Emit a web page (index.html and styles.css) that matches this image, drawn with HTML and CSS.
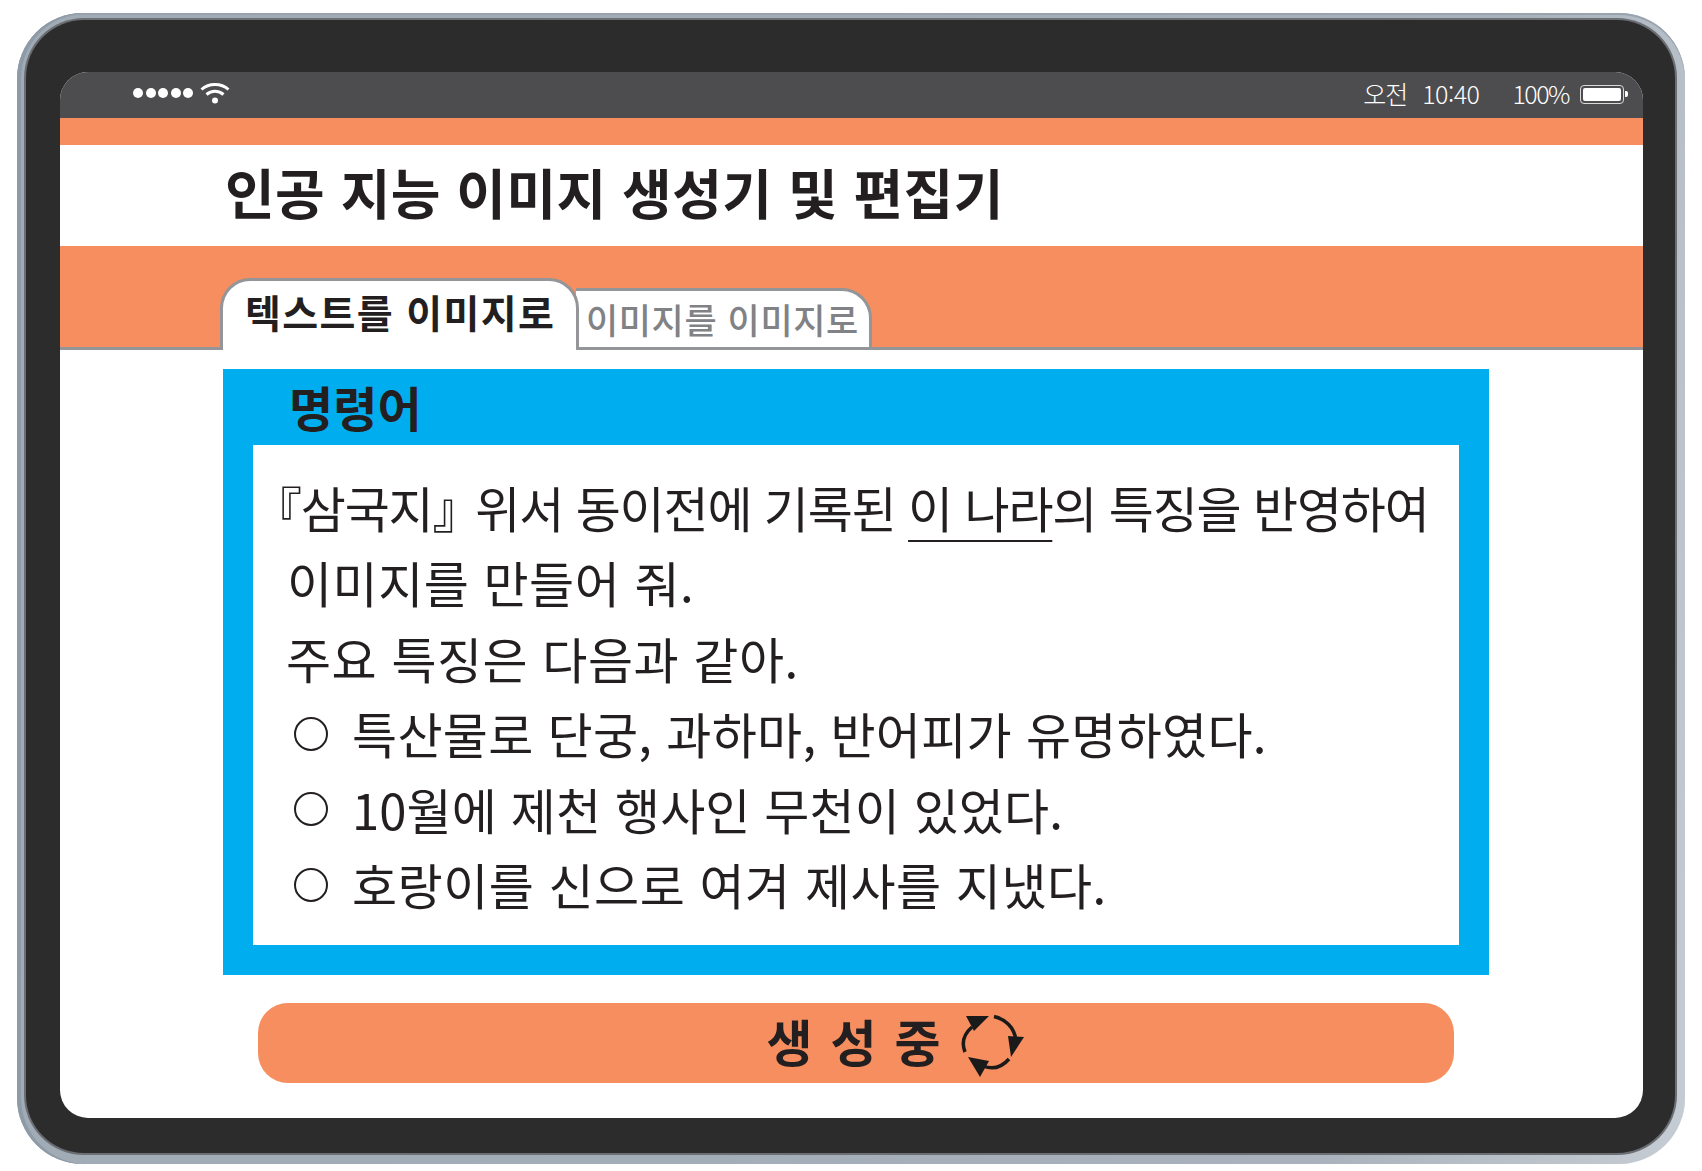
FILE: index.html
```html
<!DOCTYPE html>
<html lang="ko">
<head>
<meta charset="utf-8">
<title>인공 지능 이미지 생성기 및 편집기</title>
<link rel="stylesheet" href="styles.css">
</head>
<body>
<div class="device">
  <div class="bezel">
    <div class="screen">
      <div class="status">
        <div class="status-left">
          <div class="dots"><i></i><i></i><i></i><i></i><i></i></div>
          <svg class="wifi" width="30" height="22" viewBox="0 0 30 22"><path d="M1.500 7.500C9 .8 21 .8 28.500 7.500" fill="none" stroke="#fff" stroke-width="3"/><path d="M6.500 12.500C11.500 8.200 18.500 8.200 23.500 12.500" fill="none" stroke="#fff" stroke-width="3"/><circle cx="15" cy="18.500" r="3" fill="#fff"/></svg>
        </div>
        <div class="status-right">
          <span class="ampm">오전</span><span class="time">10:40</span><span class="pct">100%</span>
          <div class="battery"><div class="battery-body"><div class="battery-fill"></div></div><div class="battery-tip"></div></div>
        </div>
      </div>
      <div class="strip"></div>
      <h1 class="title">인공 지능 이미지 생성기 및 편집기</h1>
      <div class="tabbar">
        <div class="tab tab-active">텍스트를 이미지로</div>
        <div class="tab tab-idle">이미지를 이미지로</div>
      </div>
      <div class="content">
        <section class="panel">
          <h2 class="panel-title">명령어</h2>
          <div class="prompt">
            <p class="line line-first"><span class="source">『삼국지』</span>위서 동이전에 기록된 <span class="mark">이 나라</span>의 특징을 반영하여</p>
            <p class="line">이미지를 만들어 줘.</p>
            <p class="line line-third">주요 특징은 다음과 같아.</p>
            <p class="line item item-mid"><span class="bullet"></span>특산물로 단궁, 과하마, 반어피가 유명하였다.</p>
            <p class="line item item-tight"><span class="bullet"></span>10월에 제천 행사인 무천이 있었다.</p>
            <p class="line item"><span class="bullet"></span>호랑이를 신으로 여겨 제사를 지냈다.</p>
          </div>
        </section>
        <div class="button">
          <span class="button-label">생 성 중</span>
          <svg class="spin" width="64" height="64" viewBox="0 0 64 64">
            <g fill="none" stroke="#1a1a1a" stroke-width="3.500">
              <path d="M4 38C0 28 3 20 11 13"/>
              <path d="M33 2.500C44 5 53 13 55 26"/>
              <path d="M48 45C41 53 32 56 22 52"/>
            </g>
            <g fill="#1a1a1a">
              <path d="M28 2 5 2 13 17Z"/>
              <path d="M63 23 50 43 47 22Z"/>
              <path d="M19 63 7 43 28 47Z"/>
            </g>
          </svg>
        </div>
      </div>
    </div>
  </div>
</div>
</body>
</html>
```

FILE: styles.css
```css
* { box-sizing: border-box; }
html, body { margin: 0; padding: 0; background: #fff; }
body {
  width: 1702px;
  height: 1171px;
  padding: 13px 17px 7px 17px;
  font-family: "Noto Sans CJK KR", "Noto Sans", sans-serif;
  color: #231f20;
}
.device {
  width: 1668px;
  height: 1151px;
  border-radius: 66px;
  padding: 7px 10px 11px 9px;
  background: linear-gradient(100deg, #a0abb6 0%, #a3adb7 45%, #a9b2bc 80%, #c6ccd3 100%);
  box-shadow: inset 4px 0 0 #8d9aa7, inset 0 2px 0 #98a3ae;
}
.bezel {
  width: 100%;
  height: 100%;
  border-radius: 58px;
  background: #2d2c2d;
  padding: 52px 32px 35px 34px;
  box-shadow: 0 0 0 2px #6b6e73;
}
.screen {
  height: 100%;
  border-radius: 28px;
  background: #fff;
  overflow: hidden;
  display: flex;
  flex-direction: column;
}
.status {
  height: 46px;
  flex: none;
  background: #4d4d4f;
  color: #fff;
  display: flex;
  align-items: center;
  justify-content: space-between;
  padding: 0 15px 0 73px;
}
.status-left { display: flex; align-items: center; gap: 7px; margin-top: -4px; }
.dots { display: flex; gap: 2.500px; }
.dots i { width: 10px; height: 10px; border-radius: 50%; background: #fff; display: block; }
.wifi { display: block; margin-top: -1px; }
.status-right { display: flex; align-items: center; font-size: 25px; line-height: 30px; font-weight: 300; letter-spacing: -0.5px; margin-top: -4px; }
.ampm { margin-right: 15px; letter-spacing: -1px; }
.time { margin-right: 33px; }
.pct { margin-right: 11px; letter-spacing: -1.500px; }
.battery { display: flex; align-items: center; margin-top: 2px; }
.battery-body { width: 44px; height: 19px; border: 1px solid #d8d8d8; border-radius: 4px; padding: 2px; }
.battery-fill { width: 100%; height: 100%; background: #fff; border-radius: 2px; }
.battery-tip { width: 3px; height: 6px; background: #fff; border-radius: 0 2px 2px 0; margin-left: 1px; }
.strip { height: 27px; flex: none; background: #f68e5f; }
.title {
  height: 101px;
  flex: none;
  margin: 0;
  padding: 0 0 0 165px;
  font-size: 54px;
  line-height: 94px;
  font-weight: 700;
  letter-spacing: 0.4px;
  white-space: nowrap;
}
.tabbar {
  height: 104px;
  flex: none;
  background: #f68e5f;
  border-bottom: 3px solid #939598;
  display: flex;
  align-items: flex-end;
  padding-left: 160px;
}
.tab {
  background: #fff;
  border: 3px solid #939598;
  white-space: nowrap;
  margin-bottom: -3px;
}
.tab-active {
  width: 359px;
  height: 72px;
  border-bottom: 0;
  border-radius: 30px 30px 0 0;
  font-size: 39px;
  font-weight: 700;
  line-height: 60px;
  padding-left: 22px;
  letter-spacing: 1.350px;
  position: relative;
  z-index: 1;
}
.tab-idle {
  width: 296px;
  height: 62px;
  margin-left: -3px;
  border-left: 0;
  border-radius: 0 30px 0 0;
  font-size: 35px;
  line-height: 56px;
  padding-left: 10px;
  color: #808285;
  font-weight: 500;
  letter-spacing: 0.6px;
}
.content {
  flex: 1;
  padding: 19px 154px 0 163px;
  display: flex;
  flex-direction: column;
  align-items: center;
}
.panel {
  width: 1266px;
  height: 606px;
  flex: none;
  background: #00aeef;
  padding: 0 30px 30px;
  display: flex;
  flex-direction: column;
}
.panel-title {
  margin: 0;
  height: 76px;
  flex: none;
  padding-left: 36px;
  font-size: 48px;
  font-weight: 700;
  line-height: 74px;
  letter-spacing: 0.1px;
}
.prompt {
  flex: 1;
  background: #fff;
  padding: 24px 0 0 0;
}
.line {
  margin: 0;
  font-size: 49px;
  line-height: 75.400px;
  font-weight: 400;
  letter-spacing: 0.5px;
  white-space: nowrap;
  padding-left: 34px;
}
.line-first { padding-left: 0; letter-spacing: -1.180px; }
.line-third { padding-left: 33px; }
.source { margin-right: -5px; }
.mark { text-decoration: underline; text-decoration-thickness: 1.500px; text-underline-offset: 12px; }
.item { display: flex; align-items: center; padding-left: 41px; }
.item-mid { letter-spacing: 0.3px; }
.item-tight { letter-spacing: 0.1px; }
.bullet {
  width: 34px;
  height: 34px;
  border: 2.500px solid #231f20;
  border-radius: 50%;
  margin-right: 24px;
  margin-top: 2px;
  flex: none;
}
.button {
  margin-top: 28px;
  width: 1196px;
  height: 80px;
  flex: none;
  border-radius: 30px;
  background: #f68e5f;
  display: flex;
  align-items: center;
  justify-content: center;
  gap: 18px;
}
.button-label {
  font-size: 50px;
  font-weight: 700;
  letter-spacing: 2px;
  line-height: 80px;
  margin-left: 79px;
  margin-top: -6px;
}
.spin { display: block; margin-top: 6px; }
```
